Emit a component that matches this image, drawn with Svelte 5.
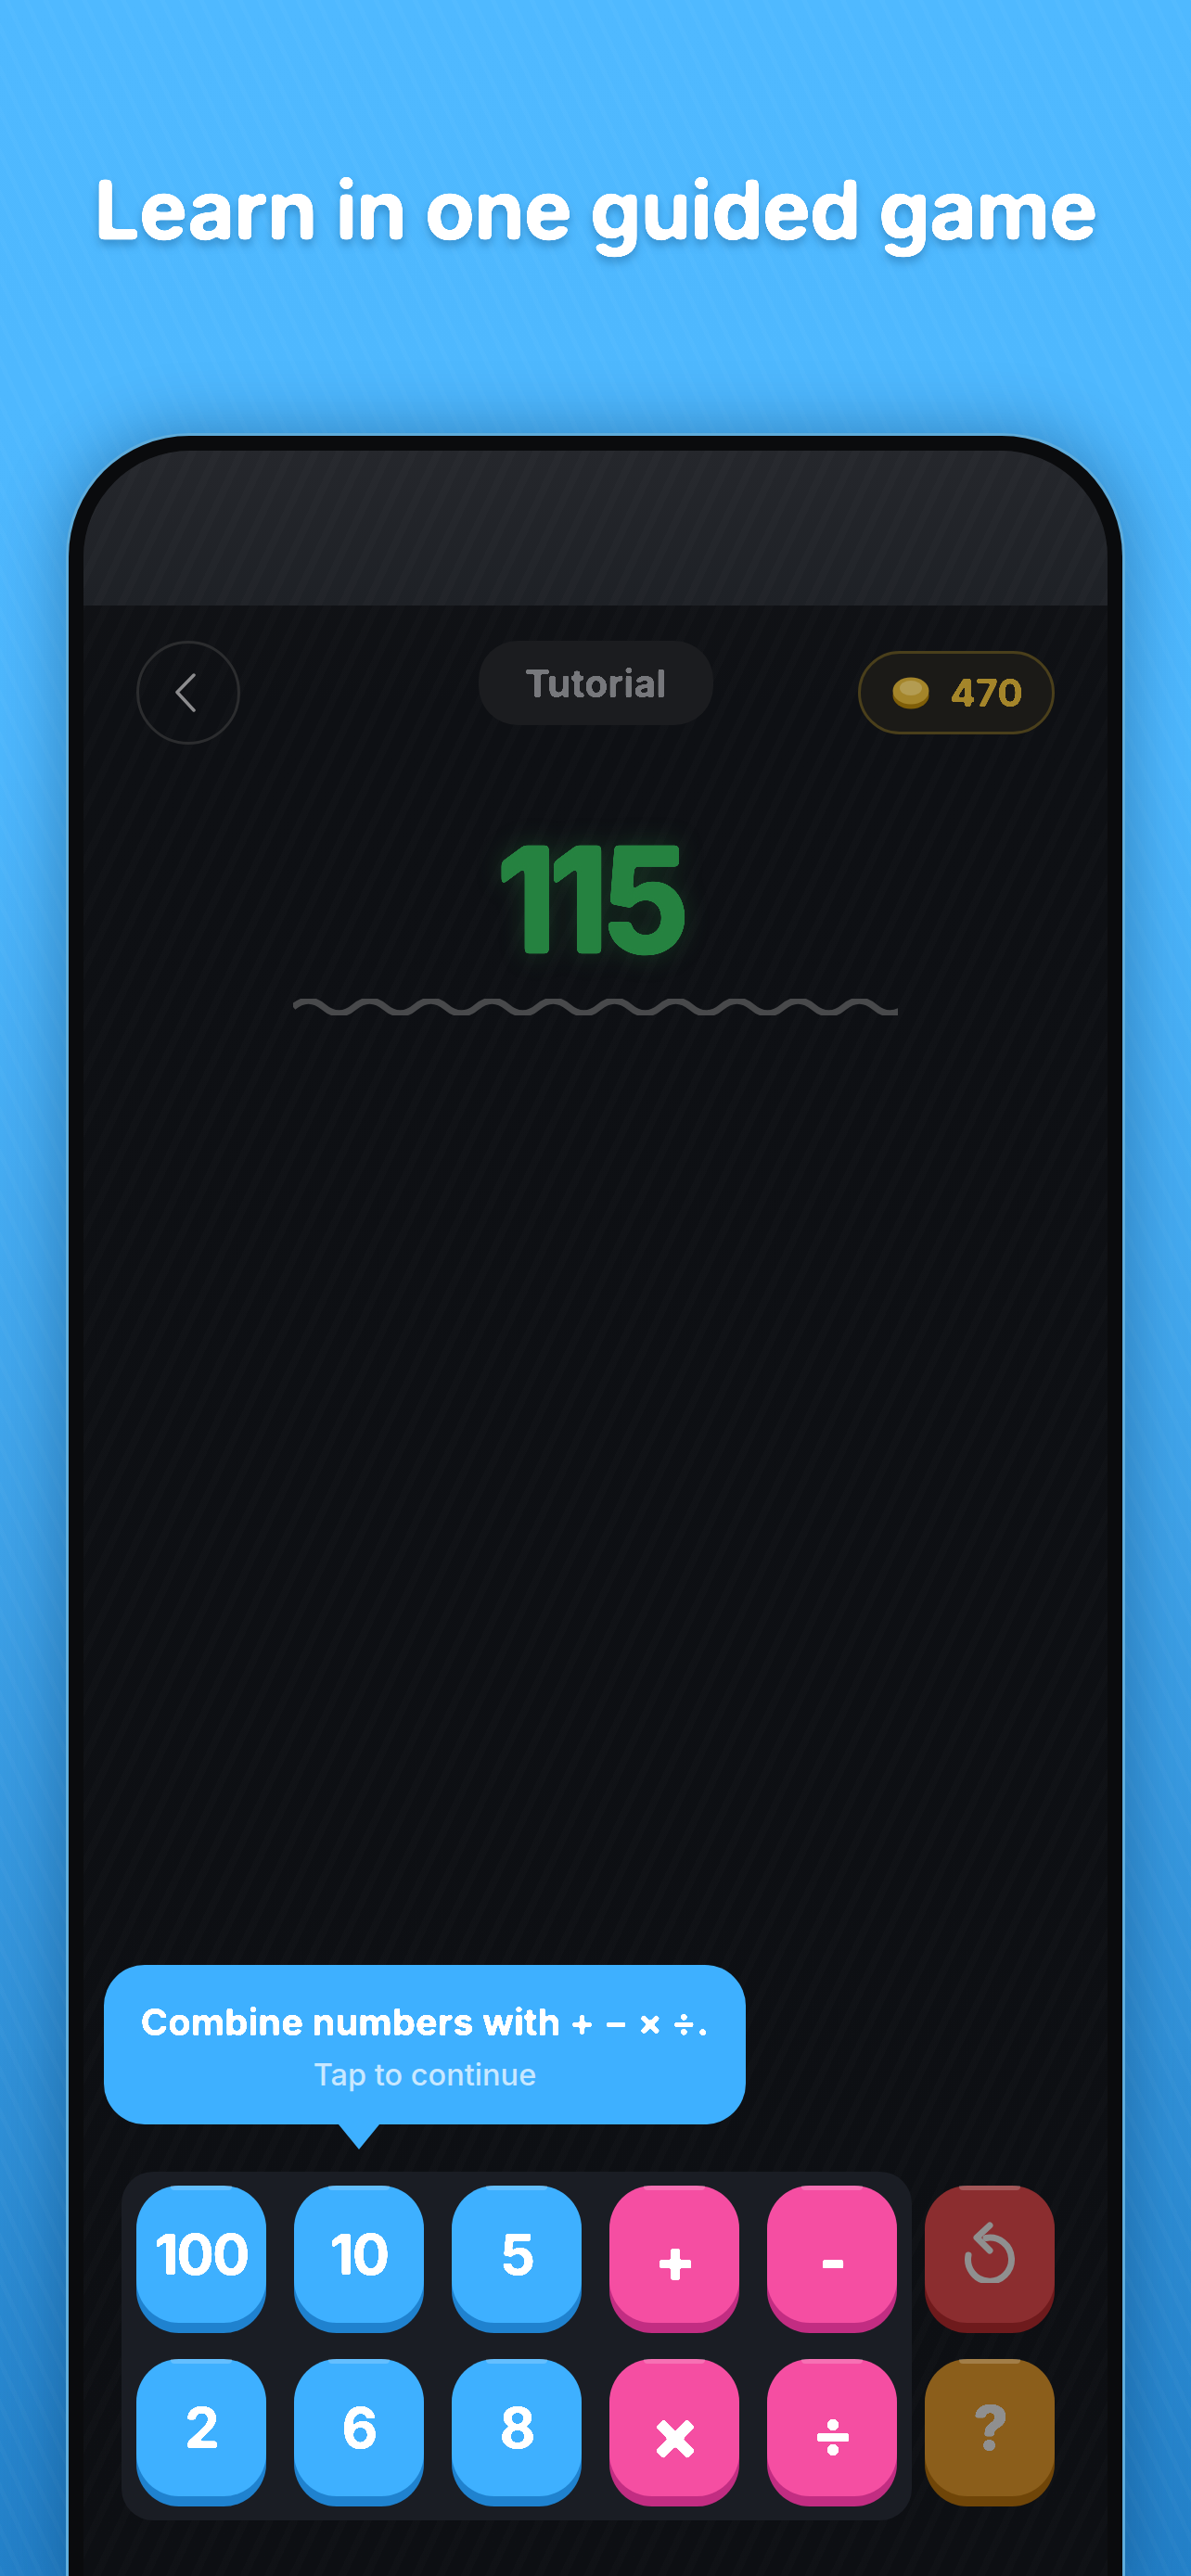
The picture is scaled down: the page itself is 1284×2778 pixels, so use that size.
<script>
  const keys = [
    { label: "100", kind: "num" },
    { label: "10", kind: "num" },
    { label: "5", kind: "num" },
    { label: "+", kind: "op" },
    { label: "-", kind: "op" },
    { label: "2", kind: "num" },
    { label: "6", kind: "num" },
    { label: "8", kind: "num" },
    { label: "×", kind: "op times" },
    { label: "÷", kind: "op" },
  ];
  // squiggle under the target number
  let wave = "M0 9";
  for (let x = 0; x < 652; x += 33) {
    wave += ` q16.5 ${(x / 33) % 2 === 0 ? -14 : 14} 33 0`;
  }
</script>

<svg class="defs" width="0" height="0" aria-hidden="true">
  <filter id="round" x="-5%" y="-5%" width="110%" height="110%" color-interpolation-filters="sRGB">
    <feGaussianBlur stdDeviation="2.4" />
    <feColorMatrix type="matrix" values="1 0 0 0 0 0 1 0 0 0 0 0 1 0 0 0 0 0 14 -5.5" />
  </filter>
  <filter id="round-sm" x="-5%" y="-5%" width="110%" height="110%" color-interpolation-filters="sRGB">
    <feGaussianBlur stdDeviation="1.2" />
    <feColorMatrix type="matrix" values="1 0 0 0 0 0 1 0 0 0 0 0 1 0 0 0 0 0 12 -4.5" />
  </filter>
</svg>

<div class="page">
  <h1 class="title">Learn in one guided game</h1>

  <div class="phone">
    <div class="screen">
      <div class="status"></div>

      <div class="topbar">
        <div class="back">
          <svg width="28" height="44" viewBox="0 0 28 44">
            <path d="M23 3 L5 21.500 L23 41" fill="none" stroke="#8c8c8e" stroke-width="3.500" stroke-linecap="round" stroke-linejoin="round" />
          </svg>
        </div>
        <div class="mode"><span>Tutorial</span></div>
        <div class="coins">
          <svg width="40" height="36" viewBox="0 0 40 36">
            <ellipse cx="20" cy="21" rx="19.500" ry="14.500" fill="#7f5e08" />
            <ellipse cx="20" cy="16" rx="19.500" ry="14.500" fill="#a4852a" />
            <ellipse cx="20" cy="13" rx="12" ry="8" fill="#b39c52" />
          </svg>
          <span>470</span>
        </div>
      </div>

      <div class="target">115</div>
      <svg class="wave" width="652" height="18" viewBox="0 0 652 18">
        <path d={wave} fill="none" stroke="#48494b" stroke-width="7" />
      </svg>

      <div class="spacer"></div>

      <div class="tip">
        <div class="tip-main">Combine numbers with + − × ÷.</div>
        <div class="tip-sub">Tap to continue</div>
      </div>

      <div class="board">
        <div class="panel">
          {#each keys as key}
            <div class="key {key.kind}"><span>{key.label}</span></div>
          {/each}
        </div>
        <div class="side">
          <div class="key undo">
            <svg width="56" height="66" viewBox="0 0 56 66">
              <path d="M5 36 A23.500 23.500 0 1 0 24 17.500" fill="none" stroke="#8f8f8f" stroke-width="7" stroke-linecap="round" />
              <path d="M28 4 L14 17 L28 31" fill="none" stroke="#8f8f8f" stroke-width="7" stroke-linecap="round" stroke-linejoin="round" />
            </svg>
          </div>
          <div class="key hint"><span>?</span></div>
        </div>
      </div>
    </div>
  </div>
</div>

<style>
  :global(body) {
    margin: 0;
    background: #2a8bd3;
  }

  .defs {
    position: absolute;
  }

  .page {
    width: 1284px;
    height: 2778px;
    overflow: hidden;
    display: flex;
    flex-direction: column;
    align-items: center;
    font-family: Inter, "Noto Sans", sans-serif;
    background:
      repeating-linear-gradient(65deg, rgba(255, 255, 255, 0.025) 0 5px, transparent 5px 19px),
      linear-gradient(180deg, #4fb9ff 0%, #4db7fd 30%, #3ea2e8 60%, #2381c9 100%);
  }

  .title {
    margin: 0;
    padding-top: 173px;
    height: 467px;
    flex-shrink: 0;
    box-sizing: border-box;
    font-size: 88px;
    font-weight: 700;
    line-height: 106px;
    letter-spacing: -1px;
    color: #fff;
    white-space: nowrap;
    filter: url(#round) drop-shadow(0 6px 5px rgba(0, 60, 110, 0.3));
  }

  .phone {
    width: 1142px;
    height: 2340px;
    flex-shrink: 0;
    box-sizing: border-box;
    padding: 16px;
    background: #0a0b0d;
    border: 3px solid #5faddc;
    border-bottom: 0;
    border-radius: 133px 133px 0 0;
    box-shadow: 0 0 70px rgba(0, 40, 80, 0.38);
  }

  .screen {
    height: 2292px;
    display: flex;
    flex-direction: column;
    overflow: hidden;
    border-radius: 115px 115px 0 0;
    background:
      repeating-linear-gradient(-65deg, rgba(255, 255, 255, 0.01) 0 8px, transparent 8px 24px),
      linear-gradient(180deg, #131417 0%, #0e1014 12%, #0d0f13 100%);
  }

  .status {
    height: 167px;
    flex-shrink: 0;
    background:
      repeating-linear-gradient(-65deg, rgba(255, 255, 255, 0.014) 0 8px, transparent 8px 24px),
      linear-gradient(180deg, #25272c, #1e2126);
  }

  .topbar {
    display: grid;
    grid-template-columns: 1fr auto 1fr;
    align-items: start;
    padding: 38px 57px 0;
  }

  .back {
    width: 112px;
    height: 112px;
    box-sizing: border-box;
    border: 3.500px solid #2b2c2e;
    border-radius: 50%;
    display: flex;
    align-items: center;
    justify-content: center;
    padding-right: 6px;
  }

  .mode {
    width: 253px;
    height: 91px;
    border-radius: 42px;
    background: #1b1c1f;
    color: #77787c;
    font-size: 41px;
    font-weight: 700;
    display: flex;
    align-items: center;
    justify-content: center;
  }

  .mode span {
    filter: url(#round-sm);
  }

  .coins {
    justify-self: end;
    margin-top: 11px;
    width: 212px;
    height: 90px;
    box-sizing: border-box;
    border: 3px solid #4a3f1b;
    border-radius: 45px;
    background: #1b1a17;
    display: flex;
    align-items: center;
    justify-content: center;
    gap: 22px;
    color: #a4852a;
    font-size: 41px;
    font-weight: 700;
    padding-left: 3px;
  }

  .coins span {
    filter: url(#round-sm);
  }

  .target {
    margin-top: 72px;
    padding-right: 16px;
    text-align: center;
    font-size: 160px;
    font-weight: 800;
    line-height: 190px;
    letter-spacing: -10px;
    color: #258240;
    transform: scaleX(0.93);
    filter: url(#round) drop-shadow(0 0 14px rgba(37, 130, 64, 0.3));
  }

  .wave {
    display: block;
    flex-shrink: 0;
    margin: 12px 0 0 226px;
  }

  .spacer {
    flex: 1;
  }

  .tip {
    align-self: flex-start;
    position: relative;
    margin: 0 0 51px 22px;
    width: 692px;
    height: 172px;
    box-sizing: border-box;
    padding-top: 37px;
    border-radius: 44px;
    background: #3eb0ff;
    text-align: center;
    color: #fff;
  }

  .tip::after {
    content: "";
    position: absolute;
    left: 253px;
    bottom: -27px;
    border-left: 22px solid transparent;
    border-right: 22px solid transparent;
    border-top: 27px solid #3eb0ff;
  }

  .tip-main {
    font-size: 40px;
    font-weight: 700;
    line-height: 50px;
    white-space: nowrap;
    filter: url(#round-sm);
  }

  .tip-sub {
    margin-top: 12px;
    font-size: 32.500px;
    font-weight: 500;
    line-height: 40px;
    color: rgba(255, 255, 255, 0.72);
  }

  .board {
    display: flex;
    align-items: flex-start;
    gap: 14px;
    padding: 0 57px 60px 41px;
  }

  .panel {
    display: grid;
    grid-template-columns: repeat(5, 140px);
    grid-auto-rows: 148px;
    gap: 39px 30px;
    padding: 15px 16px 26px;
    border-radius: 34px;
    background: #1a1d24;
  }

  .side {
    display: grid;
    grid-auto-rows: 148px;
    gap: 39px;
    padding-top: 15px;
  }

  .key {
    position: relative;
    width: 140px;
    height: 148px;
    border-radius: 46px;
    display: flex;
    align-items: center;
    justify-content: center;
    color: #fff;
    font-size: 60px;
    font-weight: 700;
    letter-spacing: -2px;
  }

  .key span {
    filter: url(#round-sm);
  }

  .key::after {
    content: "";
    position: absolute;
    top: 0;
    left: 37px;
    width: 66px;
    height: 5px;
    border-radius: 0 0 4px 4px;
    background: rgba(255, 255, 255, 0.2);
  }

  .num {
    background: #3eb0ff;
    box-shadow: 0 11px 0 #1f82cf;
  }

  .op {
    background: #f54ea2;
    box-shadow: 0 11px 0 #c22d82;
    font-size: 66px;
    font-weight: 800;
    padding-top: 12px;
    box-sizing: border-box;
  }

  .times {
    font-size: 78px;
  }

  .undo {
    background: #8b2d2f;
    box-shadow: 0 11px 0 #6e1a1c;
  }

  .undo svg {
    margin-bottom: 4px;
  }

  .hint {
    background: #8b5e1b;
    box-shadow: 0 11px 0 #6f4508;
    color: #8f8f8f;
    font-size: 66px;
    font-weight: 800;
  }
</style>
